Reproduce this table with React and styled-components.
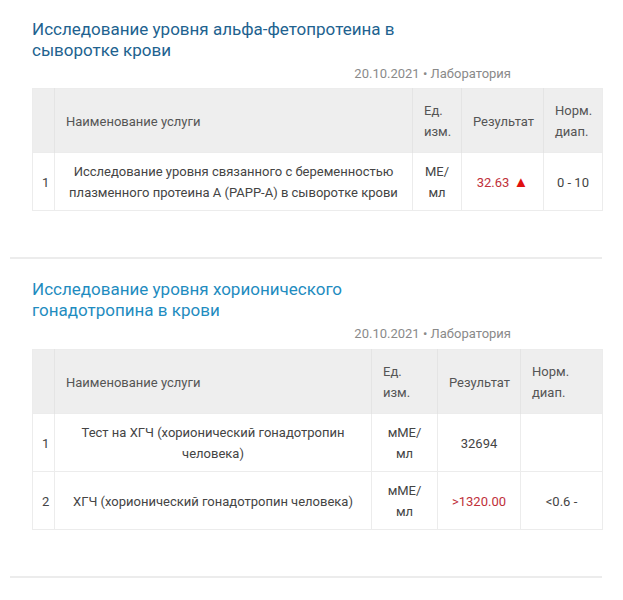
import React from "react";
import styled, { createGlobalStyle } from "styled-components";

const GlobalStyle = createGlobalStyle`
  body {
    margin: 0;
    background: #fff;
    font-family: Roboto, "Noto Sans", sans-serif;
  }
`;

const Page = styled.div`
  padding: 0 21px 0 10px;
`;

const Section = styled.section`
  padding: 19px 0 46px 22px;
  border-bottom: 2px solid #ececec;
  & + & {
    padding-top: 20px;
  }
`;

const Title = styled.h2`
  margin: 0;
  max-width: 390px;
  font-size: 17px;
  font-weight: 400;
  line-height: 21px;
  color: ${props => (props.visited ? "#21628f" : "#1f8cc0")};
`;

const Meta = styled.div`
  margin-top: 4px;
  padding-right: 91px;
  text-align: right;
  font-size: 13px;
  line-height: 18px;
  color: #8a8a8a;
`;

const Table = styled.table`
  margin-top: ${props => props.gap}px;
  width: 100%;
  border-collapse: collapse;
  table-layout: fixed;
  font-size: 13px;
  line-height: 21px;
  color: #444;
  border: 1px solid #ececec;
`;

const HeadCell = styled.th`
  background: #eeeeee;
  font-weight: 400;
  color: #555;
  text-align: ${props => props.align || "left"};
  padding: 11px 11px 10px;
  border-left: 1px solid #e4e4e4;
  &:first-child {
    border-left: none;
  }
`;

const Cell = styled.td`
  text-align: ${props => props.align || "center"};
  padding: 8px 8px 7px;
  border-left: 1px solid #ececec;
  border-top: 1px solid #ececec;
  &:first-child {
    border-left: none;
    padding-left: 9px;
  }
`;

const Value = styled.span`
  color: ${props => (props.high ? "#c0303a" : "#444")};
`;

const Arrow = styled.span`
  color: #e01010;
  font-size: 15px;
  margin-left: 4px;
`;

const sections = [
  {
    title: "Исследование уровня альфа-фетопротеина в сыворотке крови",
    visited: true,
    gap: 5,
    cols: [22, 358, 49, 82, 59],
    rows: [
      {
        name: "Исследование уровня связанного с беременностью плазменного протеина А (PAPP-A) в сыворотке крови",
        unit: "МЕ/\nмл",
        value: "32.63",
        high: true,
        arrow: true,
        norm: "0 - 10"
      }
    ]
  },
  {
    title: "Исследование уровня хорионического гонадотропина в крови",
    visited: false,
    gap: 6,
    cols: [22, 317, 66, 83, 82],
    rows: [
      {
        name: "Тест на ХГЧ (хорионический гонадотропин человека)",
        unit: "мМЕ/\nмл",
        value: "32694",
        norm: ""
      },
      {
        name: "ХГЧ (хорионический гонадотропин человека)",
        unit: "мМЕ/\nмл",
        value: ">1320.00",
        high: true,
        norm: "<0.6 -"
      }
    ]
  }
];

function Lines({ text }) {
  const parts = text.split("\n");
  return parts.map((p, i) => (
    <React.Fragment key={i}>
      {p}
      {i < parts.length - 1 && <br />}
    </React.Fragment>
  ));
}

function ResultTable({ section }) {
  return (
    <Table gap={section.gap}>
      <colgroup>
        {section.cols.map((w, i) => (
          <col key={i} style={{ width: w }} />
        ))}
      </colgroup>
      <thead>
        <tr>
          <HeadCell />
          <HeadCell>Наименование услуги</HeadCell>
          <HeadCell>
            Ед.
            <br />
            изм.
          </HeadCell>
          <HeadCell align="center">Результат</HeadCell>
          <HeadCell>
            Норм.
            <br />
            диап.
          </HeadCell>
        </tr>
      </thead>
      <tbody>
        {section.rows.map((row, i) => (
          <tr key={i}>
            <Cell align="left">{i + 1}</Cell>
            <Cell>{row.name}</Cell>
            <Cell>
              <Lines text={row.unit} />
            </Cell>
            <Cell>
              <Value high={row.high}>{row.value}</Value>
              {row.arrow && <Arrow>▲</Arrow>}
            </Cell>
            <Cell>{row.norm}</Cell>
          </tr>
        ))}
      </tbody>
    </Table>
  );
}

export default function App() {
  return (
    <Page>
      <GlobalStyle />
      {sections.map((s, i) => (
        <Section key={i}>
          <Title visited={s.visited}>{s.title}</Title>
          <Meta>20.10.2021 • Лаборатория</Meta>
          <ResultTable section={s} />
        </Section>
      ))}
    </Page>
  );
}
